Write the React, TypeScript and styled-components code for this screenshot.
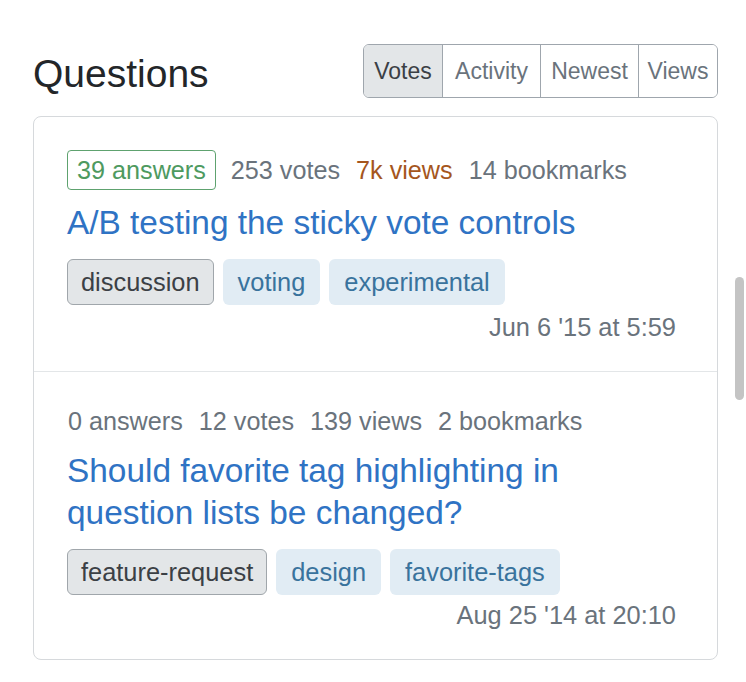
import React from "react";
import styled, { createGlobalStyle } from "styled-components";

const Global = createGlobalStyle`
  html, body { margin: 0; padding: 0; background: #ffffff; }
  body { font-family: "Liberation Sans", Arial, Helvetica, sans-serif; color: #232629; }
  * { box-sizing: border-box; }
`;

const Page = styled.div`
  padding: 44px 28px 24px 33px;
`;

const Header = styled.div`
  display: flex;
  align-items: center;
  justify-content: space-between;
  margin-bottom: 18px;
`;

const Heading = styled.h1`
  margin: 6px 0 0;
  font-size: 39px;
  font-weight: 400;
  color: #232629;
  line-height: 48px;
`;

const ButtonGroup = styled.div`
  display: flex;
  border: 1px solid #9fa6ad;
  border-radius: 6px;
  overflow: hidden;
`;

const SortButton = styled.button<{ $active?: boolean; $w: number }>`
  font-family: inherit;
  font-size: 23px;
  width: ${(p) => p.$w}px;
  height: 52px;
  padding: 0;
  margin: 0;
  border: none;
  border-left: 1px solid #9fa6ad;
  &:first-child { border-left: none; }
  background: ${(p) => (p.$active ? "#e3e6e8" : "#ffffff")};
  color: ${(p) => (p.$active ? "#3b4045" : "#6a737c")};
  cursor: pointer;
`;

const Card = styled.div`
  border: 1px solid #d6d9dc;
  border-radius: 8px;
`;

const Item = styled.div<{ $first?: boolean }>`
  padding: ${(p) => (p.$first ? "33px" : "29px")} 41px 29px 33px;
  border-bottom: 1px solid #e3e6e8;
  &:last-child { border-bottom: none; }
`;

const Stats = styled.div`
  display: flex;
  align-items: center;
  gap: 14px;
  font-size: 25.2px;
  line-height: 30px;
  color: #6a737c;
  min-height: 40px;
`;

const Stat = styled.span<{ $tone?: "answered" | "hot" | "plain" }>`
  display: inline-block;
  padding: ${(p) => (p.$tone === "answered" ? "4px 9px" : "0 1px")};
  border: ${(p) => (p.$tone === "answered" ? "1px solid #5ea26f" : "none")};
  border-radius: 4px;
  color: ${(p) =>
    p.$tone === "answered" ? "#4e9a5f" : p.$tone === "hot" ? "#a5561d" : "#6a737c"};
`;

const Title = styled.a<{ $first?: boolean }>`
  display: block;
  margin-top: ${(p) => (p.$first ? "12px" : "9px")};
  font-size: 33.4px;
  line-height: 42px;
  color: #2f73c4;
  text-decoration: none;
  padding-right: 80px;
`;

const Tags = styled.div`
  display: flex;
  gap: 9px;
  margin-top: 15px;
`;

const Tag = styled.span<{ $muted?: boolean }>`
  display: inline-block;
  height: 46px;
  line-height: 44px;
  padding: 0 ${(p) => (p.$muted ? "13px" : "14px")};
  font-size: 25.4px;
  border-radius: 6px;
  border: 1px solid ${(p) => (p.$muted ? "#a0a6ab" : "transparent")};
  background: ${(p) => (p.$muted ? "#e3e6e8" : "#e1ecf4")};
  color: ${(p) => (p.$muted ? "#3b4045" : "#39739d")};
`;

const DateLine = styled.div<{ $first?: boolean }>`
  margin-top: ${(p) => (p.$first ? "7px" : "5px")};
  text-align: right;
  font-size: 25.4px;
  line-height: 30px;
  color: #6a737c;
`;

const ScrollThumb = styled.div`
  position: fixed;
  right: 2px;
  top: 277px;
  width: 9px;
  height: 123px;
  border-radius: 5px;
  background: #c4c4c4;
`;

type Q = {
  answers: number;
  votes: number;
  views: string;
  hot?: boolean;
  bookmarks: number;
  title: string;
  tags: { name: string; muted?: boolean }[];
  date: string;
};

const questions: Q[] = [
  {
    answers: 39,
    votes: 253,
    views: "7k",
    hot: true,
    bookmarks: 14,
    title: "A/B testing the sticky vote controls",
    tags: [{ name: "discussion", muted: true }, { name: "voting" }, { name: "experimental" }],
    date: "Jun 6 '15 at 5:59",
  },
  {
    answers: 0,
    votes: 12,
    views: "139",
    bookmarks: 2,
    title: "Should favorite tag highlighting in question lists be changed?",
    tags: [{ name: "feature-request", muted: true }, { name: "design" }, { name: "favorite-tags" }],
    date: "Aug 25 '14 at 20:10",
  },
];

const sorts = [
  { label: "Votes", w: 78, active: true },
  { label: "Activity", w: 98 },
  { label: "Newest", w: 98 },
  { label: "Views", w: 79 },
];

export default function App() {
  return (
    <>
      <Global />
      <Page>
        <Header>
          <Heading>Questions</Heading>
          <ButtonGroup>
            {sorts.map((s) => (
              <SortButton key={s.label} $active={s.active} $w={s.w}>
                {s.label}
              </SortButton>
            ))}
          </ButtonGroup>
        </Header>
        <Card>
          {questions.map((q, i) => (
            <Item key={i} $first={i === 0}>
              <Stats>
                <Stat $tone={q.answers > 0 ? "answered" : "plain"}>{q.answers} answers</Stat>
                <Stat>{q.votes} votes</Stat>
                <Stat $tone={q.hot ? "hot" : "plain"}>{q.views} views</Stat>
                <Stat>{q.bookmarks} bookmarks</Stat>
              </Stats>
              <Title href="#" $first={i === 0}>
                {q.title}
              </Title>
              <Tags>
                {q.tags.map((t) => (
                  <Tag key={t.name} $muted={t.muted}>
                    {t.name}
                  </Tag>
                ))}
              </Tags>
              <DateLine $first={i === 0}>{q.date}</DateLine>
            </Item>
          ))}
        </Card>
      </Page>
      <ScrollThumb />
    </>
  );
}
